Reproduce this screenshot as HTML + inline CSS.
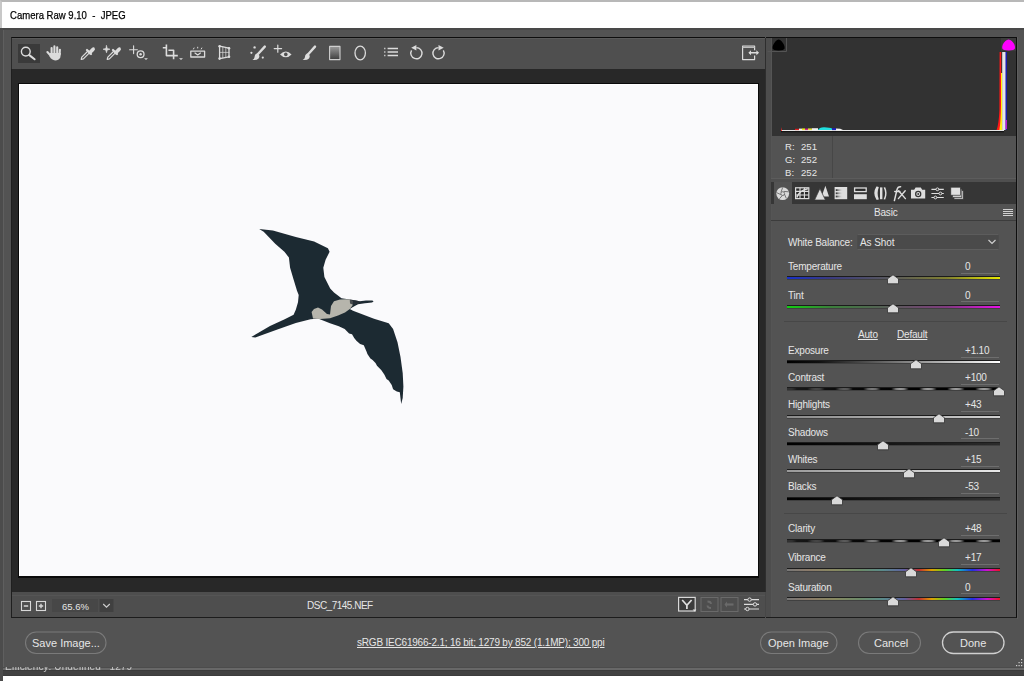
<!DOCTYPE html>
<html><head><meta charset="utf-8">
<style>
*{margin:0;padding:0;box-sizing:border-box}
html,body{width:1024px;height:681px;overflow:hidden;background:#fff;font-family:"Liberation Sans",sans-serif}
.a{position:absolute}
#root{position:relative;width:1024px;height:681px;overflow:hidden}
.t{position:absolute;white-space:nowrap;color:#e6e6e6;font-size:10px;line-height:12px;letter-spacing:-0.2px}
</style></head><body><div id="root">
<!-- desktop strip left -->
<div class="a" style="left:0;top:0;width:3px;height:681px;background:#4c4c4c"></div>
<!-- title bar -->
<div class="a" style="left:0;top:0;width:1024px;height:28px;background:#fff;border-top:2px solid #b8b8b8;border-left:2px solid #c8c8c8"></div>
<div class="t" style="left:10px;top:7.6px;color:#000;font-size:11.5px;line-height:14px;letter-spacing:0;-webkit-text-stroke:0.25px #000;transform:scaleX(0.83);transform-origin:0 0">Camera Raw 9.10&nbsp; -&nbsp; JPEG</div>
<!-- dialog body -->
<div class="a" style="left:3px;top:28px;width:1021px;height:640px;background:#535353"></div>
<div class="a" style="left:3px;top:28px;width:1px;height:640px;background:#5f5f5f"></div>
<div class="a" style="left:3px;top:28px;width:1021px;height:2px;background:#494949"></div>
<!-- toolbar -->
<div class="a" style="left:11px;top:37px;width:754px;height:32px;background:#4f4f4f;border-top:1px solid #0e0e0e;border-left:1px solid #2a2a2a;box-shadow:inset 0 1px 0 #5a5a5a"></div>
<!-- image area -->
<div class="a" style="left:11px;top:69px;width:754px;height:523px;background:#282828;border-left:1px solid #1f1f1f"></div>
<div class="a" style="left:18px;top:83px;width:741px;height:495px;background:#fafafc;border:1px solid #0a0a0a;border-bottom-width:2px;box-shadow:inset 1px 1px 0 #fff"></div>
<!-- image bottom bar -->
<div class="a" style="left:11px;top:592px;width:754px;height:26px;background:#4e4e4e;border-left:1px solid #1f1f1f;border-bottom:1px solid #1c1c1c"></div>
<div class="a" style="left:12px;top:595px;width:753px;height:1px;background:#555"></div>
<!-- right panel -->
<div class="a" style="left:766px;top:37px;width:251px;height:581px;background:#535353;border-top:1px solid #0e0e0e;border-right:1px solid #0e0e0e;border-bottom:1px solid #1c1c1c"></div>
<div class="a" style="left:765px;top:38px;width:1px;height:554px;background:#2e2e2e"></div><div class="a" style="left:765px;top:592px;width:1px;height:25px;background:#474747"></div>
<div class="a" style="left:766px;top:38px;width:5px;height:579px;background:#4d4d4d"></div>
<div class="a" style="left:771px;top:38px;width:1px;height:579px;background:#555"></div>
<div class="a" style="left:772px;top:38px;width:244px;height:98px;background:#323232"></div>
<div class="a" style="left:1017px;top:37px;width:1px;height:582px;background:#5e5e5e"></div>
<!-- tabs bar -->
<div class="a" style="left:771px;top:182px;width:245px;height:22px;background:#363636"></div>
<div class="a" style="left:774px;top:182px;width:18px;height:22px;background:#535353"></div>
<div class="a" style="left:771px;top:220px;width:245px;height:1px;background:#3c3c3c"></div>

<svg class="a" style="left:0;top:0" width="1024" height="681" viewBox="0 0 1024 681">
<g fill="none" stroke="#dcdcdc" stroke-linecap="round" stroke-linejoin="round">
<!-- zoom selected -->
<rect x="18" y="44" width="22" height="19" fill="#3a3a3a" stroke="none"/>
<circle cx="25.8" cy="51.6" r="4.4" stroke-width="1.4"/>
<line x1="29.3" y1="55.1" x2="34.6" y2="59.3" stroke-width="2"/>
<!-- hand -->
<g stroke="#dcdcdc" stroke-width="2.1" stroke-linecap="round">
<path d="M51.6 48 V53.5 M54.4 46.4 V53 M57.2 47.2 V53 M59.9 49.8 L59.6 54.5 M47.4 52 L50.6 55.6"/>
</g>
<path d="M50 53 H60.9 L60.3 57.4 Q58.8 60.4 55.2 60.4 Q51.6 60.4 49.6 56.6 Z" fill="#dcdcdc" stroke="none"/>
<!-- eyedropper -->
<g transform="translate(80,46)">
<path d="M1.2 13.4 L1.8 11.2 L8 5 L9.6 6.6 L3.4 12.8 Z" stroke-width="1.2"/>
<path d="M7 4 L11 8" stroke-width="2.2"/>
<path d="M9 6 L12.4 2.6 Q13.6 1.6 14 2.4 Q14.6 3.2 13.4 4.4 L10 7.8" fill="#dcdcdc" stroke-width="1.6"/>
</g>
<!-- color sampler -->
<path d="M106.5 45.6 L107.3 48.4 L110 49.2 L107.3 50 L106.5 52.8 L105.7 50 L103 49.2 L105.7 48.4 Z" fill="#dcdcdc" stroke-width="0.6"/>
<g transform="translate(106,46)">
<path d="M1.2 13.4 L1.8 11.2 L8 5 L9.6 6.6 L3.4 12.8 Z" stroke-width="1.2"/>
<path d="M7 4 L11 8" stroke-width="2.2"/>
<path d="M9 6 L12.4 2.6 Q13.6 1.6 14 2.4 Q14.6 3.2 13.4 4.4 L10 7.8" fill="#dcdcdc" stroke-width="1.6"/>
</g>
<!-- targeted adjustment -->
<path d="M133.6 45.8 V53.6 M129.6 49.8 H137.4" stroke-width="1.1"/>
<circle cx="140.6" cy="54.2" r="3.4" stroke-width="1.3"/>
<circle cx="140.6" cy="54.2" r="1.2" fill="#dcdcdc" stroke="none"/>
<path d="M144 58.2 H148 L146 60 Z" fill="#dcdcdc" stroke="none"/>
<!-- crop -->
<path d="M163.6 47.8 H166.4 M166.4 45.4 V55.6 H176 M169.2 50.2 H173.6 V58.4 M176.2 55.6 H177" stroke-width="1.6" stroke-linecap="square"/>
<path d="M179 58.2 H183 L181 60 Z" fill="#dcdcdc" stroke="none"/>
<!-- straighten -->
<rect x="190.8" y="51.2" width="13.8" height="5.8" stroke-width="1.3"/>
<path d="M195 53 L197.7 55 L200.4 53" stroke-width="1.2"/>
<path d="M193.5 49 L194 48 M197.7 47.2 V48 M201.8 48 L201.3 49" stroke-width="1"/>
<!-- transform -->
<path d="M219.6 46.2 L229 48.2 L229 56.8 L219.6 58.6 Z" stroke-width="1.3"/>
<path d="M222.8 47 V58 M225.8 47.6 V57.4 M219.6 52.4 H229" stroke-width="0.7"/>
<circle cx="219.6" cy="46.2" r="1.3" fill="#dcdcdc" stroke="none"/>
<circle cx="229" cy="48.2" r="1.3" fill="#dcdcdc" stroke="none"/>
<circle cx="229" cy="56.8" r="1.3" fill="#dcdcdc" stroke="none"/>
<circle cx="219.6" cy="58.6" r="1.3" fill="#dcdcdc" stroke="none"/>
<!-- spot removal -->
<path d="M264.8 46.6 L258 54" stroke-width="2.4"/>
<path d="M257.6 53.2 Q254.4 54.2 254.6 57 Q254.4 59 252.4 60 Q256.8 60.4 258.6 58.4 Q260 56.6 259 55 Z" fill="#dcdcdc" stroke="none"/>
<circle cx="254.6" cy="47.4" r="1.2" fill="#dcdcdc" stroke="none"/>
<circle cx="251.4" cy="52.8" r="1.1" fill="#dcdcdc" stroke="none"/>
<circle cx="262.8" cy="57.6" r="1.1" fill="#dcdcdc" stroke="none"/>
<!-- red eye -->
<path d="M277.8 45 V52.2 M274.2 48.6 H281.6" stroke-width="1.2"/>
<path d="M280 54.4 Q285.8 48.6 291.6 54.4 Q285.8 60.2 280 54.4 Z" fill="#dcdcdc" stroke="none"/>
<circle cx="285.8" cy="54.4" r="1.8" fill="#4f4f4f" stroke="none"/>
<!-- brush -->
<path d="M315 46.6 L308.4 54" stroke-width="2.4"/>
<path d="M308 53.2 Q304.8 54.2 305 57 Q304.8 59 302.6 60 Q307.2 60.4 309 58.4 Q310.4 56.6 309.4 55 Z" fill="#dcdcdc" stroke="none"/>
<!-- graduated filter -->
<defs><linearGradient id="gf" x1="0" y1="0" x2="0" y2="1"><stop offset="0" stop-color="#9a9a9a"/><stop offset="1" stop-color="#3e3e3e"/></linearGradient>
<linearGradient id="gfh" x1="0" y1="0" x2="1" y2="0"><stop offset="0" stop-color="#e6e6e6"/><stop offset="1" stop-color="#444"/></linearGradient></defs>
<rect x="329.6" y="46.4" width="10.4" height="13.2" fill="url(#gf)" stroke="#cfcfcf" stroke-width="1.1"/>
<!-- radial -->
<ellipse cx="360.2" cy="53" rx="5.2" ry="6.8" stroke-width="1.3"/>
<!-- list -->
<path d="M384.2 48.5 h1.2 M384.2 52 h1.2 M384.2 55.5 h1.2" stroke-width="1.3" stroke-linecap="butt"/>
<path d="M387.6 48.5 H398 M387.6 52 H398 M387.6 55.5 H398" stroke-width="1.3" stroke-linecap="butt"/>
<!-- rotate left -->
<path d="M416.4 47.6 A5.6 5.6 0 1 1 411.55 50.4" stroke-width="1.4" stroke-linecap="butt"/>
<path d="M411.2 47.7 L416.4 44.9 L416.4 50.5 Z" fill="#dcdcdc" stroke="none"/>
<!-- rotate right -->
<path d="M438.5 47.6 A5.6 5.6 0 1 0 443.35 50.4" stroke-width="1.4" stroke-linecap="butt"/>
<path d="M443.7 47.7 L438.5 44.9 L438.5 50.5 Z" fill="#dcdcdc" stroke="none"/>
<!-- exit -->
<path d="M754.6 50.2 V46 H742.6 V59.6 H754.6 V55.4" stroke-width="1.2" stroke-linecap="butt"/>
<path d="M743 47.2 H754" stroke-width="1.6" stroke="#bdbdbd"/>
<path d="M749.6 52.7 H757.6" stroke-width="1.4"/>
<path d="M748.4 52.7 L751 50.2 V55.2 Z M759 52.7 L756.4 50.2 V55.2 Z" fill="#dcdcdc" stroke="none"/>
</g>
</svg>

<!-- RGB readout -->
<div class="t" style="left:785px;top:140px;line-height:13px;font-size:9.6px;letter-spacing:0">R:<br>G:<br>B:</div>
<div class="t" style="left:801px;top:140px;line-height:13px;font-size:9.6px;letter-spacing:0">251<br>252<br>252</div>
<div class="a" style="left:832px;top:136px;width:1px;height:45px;background:#474747"></div>
<div class="a" style="left:771px;top:178px;width:245px;height:1px;background:#5c5c5c"></div><div class="a" style="left:771px;top:179px;width:245px;height:3px;background:#4f4f4f"></div>
<!-- Basic header -->
<div class="t" style="left:874px;top:207px">Basic</div>
<div class="a" style="left:1003px;top:209px;width:10px;height:8px;background:repeating-linear-gradient(180deg,#d0d0d0 0,#d0d0d0 1px,transparent 1px,transparent 2px)"></div>
<!-- white balance -->
<div class="t" style="left:788px;top:237px">White Balance:</div>
<div class="a" style="left:857px;top:234px;width:142px;height:16px;background:#4a4a4a;border:1px solid #4c4c4c;border-top-color:#5c5c5c;border-bottom-color:#5e5e5e"></div>
<div class="t" style="left:860px;top:237px;letter-spacing:-0.1px">As Shot</div>
<svg class="a" style="left:987px;top:238px" width="10" height="8"><path d="M1.5 2 L5 5.5 L8.5 2" fill="none" stroke="#cfcfcf" stroke-width="1.2"/></svg>
<div class="a" style="left:784px;top:321px;width:223px;height:1px;background:#474747"></div>
<div class="t" style="left:858px;top:329px;text-decoration:underline">Auto</div>
<div class="t" style="left:897px;top:329px;text-decoration:underline">Default</div>
<div class="a" style="left:784px;top:513px;width:223px;height:1px;background:#474747"></div>
<!-- SLIDERS -->
<div class="t" style="left:788px;top:261.1px">Temperature</div>
<div class="t" style="left:965px;top:261.1px">0</div>
<div class="a" style="left:961px;top:273px;width:38px;height:1px;background:#6e6e6e"></div>
<div class="a" style="left:787px;top:275.6px;width:213px;height:4px;border-top:1px solid #1c1c1c;border-bottom:1px solid #404040;background:linear-gradient(90deg,#1830c8,#3a3a80 20%,#5a5a5a 50%,#808030 75%,#e8e800)"></div>
<svg class="a" style="left:885.0px;top:274.1px" width="16" height="11" viewBox="0 0 16 11"><path d="M2.5 9.8 V4.8 L8 0.8 L13.5 4.8 V9.8 Z" fill="#d9d9d9" stroke="#303030" stroke-width="0.8"/></svg>
<div class="t" style="left:788px;top:289.5px">Tint</div>
<div class="t" style="left:965px;top:289.5px">0</div>
<div class="a" style="left:961px;top:301px;width:38px;height:1px;background:#6e6e6e"></div>
<div class="a" style="left:787px;top:304.9px;width:213px;height:4px;border-top:1px solid #1c1c1c;border-bottom:1px solid #404040;background:linear-gradient(90deg,#10d010,#3a803a 20%,#5a5a5a 50%,#803a80 75%,#e810e8)"></div>
<svg class="a" style="left:885.0px;top:303.4px" width="16" height="11" viewBox="0 0 16 11"><path d="M2.5 9.8 V4.8 L8 0.8 L13.5 4.8 V9.8 Z" fill="#d9d9d9" stroke="#303030" stroke-width="0.8"/></svg>
<div class="t" style="left:788px;top:345.3px">Exposure</div>
<div class="t" style="left:965px;top:345.3px">+1.10</div>
<div class="a" style="left:961px;top:357px;width:38px;height:1px;background:#6e6e6e"></div>
<div class="a" style="left:787px;top:360.2px;width:213px;height:4px;border-top:1px solid #1c1c1c;border-bottom:1px solid #404040;background:linear-gradient(90deg,#000,#101010 15%,#fff)"></div>
<svg class="a" style="left:907.8px;top:358.7px" width="16" height="11" viewBox="0 0 16 11"><path d="M2.5 9.8 V4.8 L8 0.8 L13.5 4.8 V9.8 Z" fill="#d9d9d9" stroke="#303030" stroke-width="0.8"/></svg>
<div class="t" style="left:788px;top:372.0px">Contrast</div>
<div class="t" style="left:965px;top:372.0px">+100</div>
<div class="a" style="left:961px;top:384px;width:38px;height:1px;background:#6e6e6e"></div>
<div class="a" style="left:787px;top:387.2px;width:213px;height:4px;border-top:1px solid #1c1c1c;border-bottom:1px solid #404040;background:#000;background-image:linear-gradient(90deg,rgba(30,30,30,0.85) 0%,rgba(20,20,20,0.5) 25%,rgba(0,0,0,0) 55%),radial-gradient(ellipse 9px 2.2px at 50% 50%,#b0b0b0 0%,#808080 50%,#000 100%);background-size:100% 100%,28px 100%;background-position:0 0,15px 0"></div>
<svg class="a" style="left:990.8px;top:385.7px" width="16" height="11" viewBox="0 0 16 11"><path d="M2.5 9.8 V4.8 L8 0.8 L13.5 4.8 V9.8 Z" fill="#d9d9d9" stroke="#303030" stroke-width="0.8"/></svg>
<div class="t" style="left:788px;top:399.3px">Highlights</div>
<div class="t" style="left:965px;top:399.3px">+43</div>
<div class="a" style="left:961px;top:411px;width:38px;height:1px;background:#6e6e6e"></div>
<div class="a" style="left:787px;top:414.6px;width:213px;height:4px;border-top:1px solid #1c1c1c;border-bottom:1px solid #404040;background:linear-gradient(90deg,#8a8a8a,#d0d0d0)"></div>
<svg class="a" style="left:931.0px;top:413.1px" width="16" height="11" viewBox="0 0 16 11"><path d="M2.5 9.8 V4.8 L8 0.8 L13.5 4.8 V9.8 Z" fill="#d9d9d9" stroke="#303030" stroke-width="0.8"/></svg>
<div class="t" style="left:788px;top:426.8px">Shadows</div>
<div class="t" style="left:965px;top:426.8px">-10</div>
<div class="a" style="left:961px;top:438px;width:38px;height:1px;background:#6e6e6e"></div>
<div class="a" style="left:787px;top:441.8px;width:213px;height:4px;border-top:1px solid #1c1c1c;border-bottom:1px solid #404040;background:linear-gradient(90deg,#000,#2c2c2c)"></div>
<svg class="a" style="left:874.5px;top:440.3px" width="16" height="11" viewBox="0 0 16 11"><path d="M2.5 9.8 V4.8 L8 0.8 L13.5 4.8 V9.8 Z" fill="#d9d9d9" stroke="#303030" stroke-width="0.8"/></svg>
<div class="t" style="left:788px;top:453.9px">Whites</div>
<div class="t" style="left:965px;top:453.9px">+15</div>
<div class="a" style="left:961px;top:466px;width:38px;height:1px;background:#6e6e6e"></div>
<div class="a" style="left:787px;top:469.4px;width:213px;height:4px;border-top:1px solid #1c1c1c;border-bottom:1px solid #404040;background:linear-gradient(90deg,#9a9a9a,#e8e8e8)"></div>
<svg class="a" style="left:901.2px;top:467.9px" width="16" height="11" viewBox="0 0 16 11"><path d="M2.5 9.8 V4.8 L8 0.8 L13.5 4.8 V9.8 Z" fill="#d9d9d9" stroke="#303030" stroke-width="0.8"/></svg>
<div class="t" style="left:788px;top:481.3px">Blacks</div>
<div class="t" style="left:965px;top:481.3px">-53</div>
<div class="a" style="left:961px;top:493px;width:38px;height:1px;background:#6e6e6e"></div>
<div class="a" style="left:787px;top:496.8px;width:213px;height:4px;border-top:1px solid #1c1c1c;border-bottom:1px solid #404040;background:linear-gradient(90deg,#000,#333)"></div>
<svg class="a" style="left:828.8px;top:495.3px" width="16" height="11" viewBox="0 0 16 11"><path d="M2.5 9.8 V4.8 L8 0.8 L13.5 4.8 V9.8 Z" fill="#d9d9d9" stroke="#303030" stroke-width="0.8"/></svg>
<div class="t" style="left:788px;top:523.2px">Clarity</div>
<div class="t" style="left:965px;top:523.2px">+48</div>
<div class="a" style="left:961px;top:535px;width:38px;height:1px;background:#6e6e6e"></div>
<div class="a" style="left:787px;top:538.8px;width:213px;height:4px;border-top:1px solid #1c1c1c;border-bottom:1px solid #404040;background:#000;background-image:linear-gradient(90deg,rgba(30,30,30,0.85) 0%,rgba(20,20,20,0.5) 25%,rgba(0,0,0,0) 55%),radial-gradient(ellipse 9px 2.2px at 50% 50%,#b0b0b0 0%,#808080 50%,#000 100%);background-size:100% 100%,28px 100%;background-position:0 0,15px 0"></div>
<svg class="a" style="left:936.2px;top:537.3px" width="16" height="11" viewBox="0 0 16 11"><path d="M2.5 9.8 V4.8 L8 0.8 L13.5 4.8 V9.8 Z" fill="#d9d9d9" stroke="#303030" stroke-width="0.8"/></svg>
<div class="t" style="left:788px;top:552.3px">Vibrance</div>
<div class="t" style="left:965px;top:552.3px">+17</div>
<div class="a" style="left:961px;top:564px;width:38px;height:1px;background:#6e6e6e"></div>
<div class="a" style="left:787px;top:568.0px;width:213px;height:4px;border-top:1px solid #1c1c1c;border-bottom:1px solid #404040;background:linear-gradient(90deg,#777 0%,#8a7a6a 10%,#888860 22%,#6a8a6a 35%,#5a8a8a 45%,#6060a0 55%,#c03030 62%,#e0a000 68%,#60d020 74%,#10c0c0 80%,#2030e0 87%,#d010d0 94%,#f01020 100%)"></div>
<svg class="a" style="left:902.7px;top:566.5px" width="16" height="11" viewBox="0 0 16 11"><path d="M2.5 9.8 V4.8 L8 0.8 L13.5 4.8 V9.8 Z" fill="#d9d9d9" stroke="#303030" stroke-width="0.8"/></svg>
<div class="t" style="left:788px;top:581.6px">Saturation</div>
<div class="t" style="left:965px;top:581.6px">0</div>
<div class="a" style="left:961px;top:593px;width:38px;height:1px;background:#6e6e6e"></div>
<div class="a" style="left:787px;top:597.1px;width:213px;height:4px;border-top:1px solid #1c1c1c;border-bottom:1px solid #404040;background:linear-gradient(90deg,#777 0%,#8a7a6a 10%,#888860 22%,#6a8a6a 35%,#5a8a8a 45%,#6060a0 55%,#c03030 62%,#e0a000 68%,#60d020 74%,#10c0c0 80%,#2030e0 87%,#d010d0 94%,#f01020 100%)"></div>
<svg class="a" style="left:885.0px;top:595.6px" width="16" height="11" viewBox="0 0 16 11"><path d="M2.5 9.8 V4.8 L8 0.8 L13.5 4.8 V9.8 Z" fill="#d9d9d9" stroke="#303030" stroke-width="0.8"/></svg>
<!-- /SLIDERS -->
<!-- histogram -->
<svg class="a" style="left:0;top:0" width="1024" height="681" viewBox="0 0 1024 681">
<path d="M767.5 51.5 H786.5 V38" fill="none" stroke="#555" stroke-width="1"/>
<path d="M772.6 48.5 Q772.2 45 775.6 41.2 Q778.6 37.8 781.6 41.2 Q785 45 784.6 48.5 Q784 50.4 778.6 50.4 Q773.2 50.4 772.6 48.5 Z" fill="#000"/>
<rect x="1001" y="38" width="15" height="13" fill="#3c3c3c"/>
<path d="M1002.2 48.2 Q1001.8 44.6 1005.4 41 Q1008.6 37.8 1011.8 41 Q1015.4 44.6 1015 48.2 Q1014.4 50.4 1008.6 50.4 Q1002.8 50.4 1002.2 48.2 Z" fill="#ff00ff"/>
<rect x="781" y="130" width="223" height="1.2" fill="#e8e8e8"/><rect x="781" y="131.2" width="223" height="1" fill="#050505"/>
<path d="M781 131 V127 L782 131 Z" fill="#ff2020"/>
<rect x="795" y="128.8" width="4" height="1.3" fill="#e02020"/>
<rect x="799" y="128.6" width="3" height="1.5" fill="#f0f0f0"/>
<rect x="802" y="128.4" width="3" height="1.7" fill="#e8e820"/>
<rect x="805" y="128.6" width="3" height="1.5" fill="#d02090"/>
<rect x="808" y="128.4" width="4" height="1.7" fill="#e0e040"/>
<rect x="812" y="128.2" width="6" height="1.9" fill="#f0f0f0"/>
<path d="M818 130 Q819 127.4 824 127.2 Q830 127.4 832 128.4 L832 130 Z" fill="#20e0e0"/>
<rect x="832" y="128.2" width="4" height="1.9" fill="#2020c0"/>
<path d="M836 130 V128.6 Q841 128.6 843 130 Z" fill="#f0f0f0"/>
<path d="M999.6 52 H1001.2 V130 H996.6 Q998.8 124 999.4 110 Z" fill="#ff1818"/>
<path d="M1001 73 H1002.4 V130 H999.4 Q1000.8 122 1001 105 Z" fill="#ffee10"/>
<rect x="1002.2" y="52" width="3.6" height="78" fill="#e6e6e6"/>
<rect x="1005.6" y="52" width="1.2" height="78" fill="#1818d0"/>
<rect x="1005.6" y="120" width="1.2" height="9" fill="#e020e0"/>
<!-- tab icons -->
<circle cx="782.7" cy="193.6" r="6.4" fill="#dadada"/>
<g fill="none" stroke="#6a6a6a" stroke-width="0.9">
<path d="M782.7 187.4 L781 192.2 M788.6 191.8 L783.8 191.4 M786.4 198.6 L784.4 194 M779.4 198.8 L782.4 195.4 M776.6 192.6 L780.8 194.6"/>
<circle cx="782.7" cy="193.6" r="1.9"/>
</g>
<rect x="795.6" y="187.8" width="13.2" height="10.8" fill="#2a2a2a" stroke="#dedede" stroke-width="1.2"/>
<path d="M800 187.8 V198.6 M804.4 187.8 V198.6 M795.6 191.4 H808.8 M795.6 195 H808.8" stroke="#dedede" stroke-width="1.1" fill="none"/>
<path d="M796.8 197.6 Q799.4 190.4 807.8 188.8" stroke="#dedede" stroke-width="1.5" fill="none"/>
<path d="M821.6 196.4 L825.4 185.8 L829 196.4 Z" fill="#dedede"/>
<path d="M814.6 200 L819.9 188.6 L825.4 200 Z" fill="#dedede" stroke="#363636" stroke-width="0.7"/>
<defs><linearGradient id="hsl" x1="0" y1="0" x2="1" y2="0"><stop offset="0" stop-color="#202020"/><stop offset="0.7" stop-color="#dedede" stop-opacity="0"/></linearGradient></defs>
<rect x="834.6" y="187" width="12.6" height="12.2" fill="#dedede"/>
<rect x="835.8" y="189.2" width="10.4" height="1.8" fill="url(#hsl)"/>
<rect x="835.8" y="192.4" width="10.4" height="1.8" fill="url(#hsl)"/>
<rect x="835.8" y="195.6" width="10.4" height="1.8" fill="url(#hsl)"/>
<rect x="854.6" y="188" width="11.6" height="3.6" fill="#2a2a2a" stroke="#dedede" stroke-width="1.3"/>
<rect x="854" y="194.2" width="12.8" height="5" fill="#dedede"/>
<path d="M876.4 186.6 Q872.2 193.2 876.4 199.8 Q878.6 199.8 878.8 199.2 Q876.4 193.2 878.8 187.2 Q878.6 186.6 876.4 186.6 Z" fill="#dedede"/>
<rect x="880" y="187.4" width="2.4" height="11.8" fill="#dedede"/>
<path d="M883.6 187.4 Q886.8 193.2 883.6 199.2 L885.2 199.4 Q888 193.2 885.2 187.2 Z" fill="#dedede"/>
<path d="M894.4 200.6 L897 189.6 Q897.8 186.6 900.6 186.8 M894.8 191.4 H899.8" stroke="#dedede" stroke-width="1.5" fill="none" stroke-linecap="round"/>
<path d="M898.6 190.8 L905.4 198.6 M905.2 190.8 L898.4 198.6" stroke="#dedede" stroke-width="1.4" fill="none" stroke-linecap="round"/>
<path d="M911 189.8 H914.2 L915.6 187.4 H920.8 L922.2 189.8 H925.2 V198.6 H911 Z" fill="#dedede"/>
<circle cx="918.2" cy="194" r="3.2" fill="#363636"/>
<circle cx="918.2" cy="194" r="1.9" fill="#dedede"/>
<circle cx="918.2" cy="194" r="0.9" fill="#363636"/>
<g stroke="#dedede" stroke-width="1.2" fill="none">
<path d="M931.4 189.3 H943.8 M931.4 193.5 H943.8 M931.4 197.5 H943.8"/>
</g>
<g fill="#363636" stroke="#dedede" stroke-width="1">
<circle cx="937.4" cy="189.3" r="1.4"/><circle cx="940.4" cy="193.5" r="1.4"/><circle cx="935.4" cy="197.5" r="1.4"/>
</g>
<g stroke="#363636" stroke-width="0.7">
<rect x="954" y="190.6" width="9.4" height="8.6" fill="#c8c8c8"/>
<rect x="952.4" y="189" width="9.4" height="8.6" fill="#d0d0d0"/>
<rect x="950.8" y="187.2" width="9.6" height="8" fill="#e0e0e0"/>
</g>
<!-- bottom bar icons -->
<g fill="none" stroke="#d8d8d8" stroke-width="1.1">
<rect x="21.5" y="601.5" width="9" height="9"/>
<rect x="36.5" y="601.5" width="9" height="9"/>
<path d="M23.8 606 H28.2 M38.8 606 H43.2 M41 603.8 V608.2" stroke-width="1.4"/>
</g>
<rect x="52" y="599" width="46" height="13" fill="#474747"/>
<rect x="99.5" y="599" width="14" height="13" fill="#404040"/>
<path d="M103.2 604 L106.5 607.2 L109.8 604" fill="none" stroke="#cfcfcf" stroke-width="1.1"/>
<rect x="678.6" y="597.4" width="16.6" height="13.6" fill="#3c3c3c" stroke="#d8d8d8" stroke-width="1.2"/>
<path d="M682.2 600 L686.9 605.2 L691.6 600 M686.9 605.2 V609" fill="none" stroke="#e0e0e0" stroke-width="1.7"/>
<path d="M692.6 609.6 H696.4 L694.5 611.6Z" fill="#e0e0e0"/>
<rect x="701" y="597.5" width="17" height="14" fill="none" stroke="#6a6a6a" stroke-width="1"/>
<rect x="721" y="597.5" width="17" height="14" fill="none" stroke="#6a6a6a" stroke-width="1"/>
<path d="M707.5 601.5 Q711 601.5 711 604 M711 608 Q707.5 608 707.5 605.5" stroke="#6a6a6a" stroke-width="1.8" fill="none"/>
<path d="M725.5 604.5 H733.5" stroke="#6a6a6a" stroke-width="2.2" fill="none"/><path d="M727 601.5 V607.5 L724.5 604.5 Z" fill="#6a6a6a"/>
<g stroke="#dcdcdc" stroke-width="1.2" fill="none">
<path d="M744 599.6 H759 M744 604.4 H759 M744 609 H759"/>
</g>
<g fill="#4b4b4b" stroke="#dcdcdc" stroke-width="1">
<circle cx="749.6" cy="599.6" r="1.7"/><circle cx="755" cy="604.4" r="1.7"/><circle cx="747.4" cy="609" r="1.7"/>
</g>
<!-- buttons -->
<g fill="none" stroke-width="1.1">
<rect x="25.5" y="632" width="80.5" height="21.5" rx="10.75" stroke="#7a7a7a"/>
<rect x="760.5" y="632" width="76.5" height="21.5" rx="10.75" stroke="#7a7a7a"/>
<rect x="858.5" y="632" width="62" height="21.5" rx="10.75" stroke="#7a7a7a"/>
<rect x="942.5" y="632" width="61.5" height="21.5" rx="10.75" stroke="#d0d0d0" stroke-width="1.3"/>
</g>
</svg>
<div class="t" style="left:62px;top:600.5px;font-size:9.5px;letter-spacing:0">65.6%</div>
<div class="t" style="left:307px;top:600px;font-size:10px;letter-spacing:-0.5px">DSC_7145.NEF</div>
<div class="t" style="left:32px;top:637px;font-size:11px;letter-spacing:0">Save Image...</div>
<div class="t" style="left:357px;top:637px;font-size:10px;text-decoration:underline">sRGB IEC61966-2.1; 16 bit; 1279 by 852 (1.1MP); 300 ppi</div>
<div class="t" style="left:768px;top:637px;font-size:11px;letter-spacing:0">Open Image</div>
<div class="t" style="left:874px;top:637px;font-size:11px;letter-spacing:0">Cancel</div>
<div class="t" style="left:960px;top:637px;font-size:11px;letter-spacing:0">Done</div>
<!-- bird -->
<svg class="a" style="left:0;top:0" width="1024" height="681" viewBox="0 0 1024 681"><defs><filter id="soft" x="-10%" y="-10%" width="120%" height="120%"><feGaussianBlur stdDeviation="0.35"/></filter></defs>
<path fill="#1f2a33" filter="url(#soft)" d="M259.2 228.9 L272.9 230.6 L295.8 236.9 L314.1 241.5 L327.9 248.3 L329.6 251.8 L325.6 259.8 L323.3 267.8 L324.4 277.0 L330.2 288.4 L334.0 292.5 L341.5 298.3 L349.8 299.5 L353.0 300.0 L359.7 301.2 L366.0 300.6 L372.4 300.4 L373.6 301.6 L372.0 302.6 L365.0 303.2 L358.0 304.2 L353.0 307.0 L349.8 309.0 L353.0 310.7 L374.0 318.8 L388.7 323.2 L393.1 329.1 L397.5 342.3 L400.5 357.0 L402.7 373.1 L403.4 386.4 L402.7 398.1 L401.2 404.0 L399.8 392.2 L396.8 391.5 L393.1 389.3 L391.7 384.9 L388.7 380.5 L386.5 379.0 L384.3 374.6 L381.4 370.2 L379.2 368.0 L377.0 365.8 L375.5 362.9 L372.6 359.9 L370.4 358.5 L367.4 354.1 L366.7 351.9 L365.2 348.5 L363.8 345.2 L360.1 344.1 L356.4 340.8 L354.2 337.9 L352.0 334.2 L349.1 333.5 L344.7 329.1 L338.8 326.2 L338.8 326.2 L330.0 323.2 L318.0 318.5 L310.5 319.2 L295.8 322.9 L277.4 329.5 L255.3 337.6 L251.3 336.9 L270.0 325.9 L284.7 319.2 L293.6 314.8 L295.8 309.7 L298.0 302.3 L298.7 295.0 L297.0 290.7 L293.5 279.3 L290.1 267.8 L288.9 257.5 L284.4 251.8 L275.2 243.8 L263.7 231.7 Z"/>
<path fill="#b6b5ac" filter="url(#soft)" d="M311.6 312.0 L314.0 309.0 L318.0 307.5 L322.0 309.5 L327.0 314.0 L330.0 314.5 L331.0 306.0 L334.0 301.2 L340.0 299.5 L346.0 299.2 L350.0 299.6 L353.0 301.0 L352.5 305.5 L349.8 309.0 L345.0 312.5 L338.0 315.5 L330.0 318.2 L320.0 319.0 L313.0 318.5 Z"/>
<path fill="#2a3137" d="M349.8 299.8 Q355 299.6 360 301.6 L358 304 Q353 305 350 303.5 Z" opacity="0.8"/>
</svg>
<!-- bottom status strip (desktop) -->
<div class="a" style="left:3px;top:667px;width:1021px;height:1px;background:#4c4c4c"></div>
<div class="a" style="left:3px;top:668px;width:1021px;height:2px;background:#686868"></div>
<div class="a" style="left:3px;top:670px;width:1021px;height:6px;background:#414141;border-top:1px solid #3a3a3a;border-bottom:1px solid #3c3c3c"></div>
<div class="a" style="left:4px;top:667px;width:130px;height:5px;overflow:hidden;opacity:0.8"><div class="t" style="left:1px;top:-6.5px;font-size:10px;color:#e0e0e0;letter-spacing:0.1px">Efficiency: Undefined&nbsp;&nbsp; 1279 by</div></div>
<svg class="a" style="left:1014px;top:658px" width="10" height="10"><g fill="#cfcfcf"><rect x="7" y="1" width="1.2" height="1.2"/><rect x="4.5" y="4" width="1.2" height="1.2"/><rect x="7" y="4" width="1.2" height="1.2"/><rect x="2" y="7" width="1.2" height="1.2"/><rect x="4.5" y="7" width="1.2" height="1.2"/><rect x="7" y="7" width="1.2" height="1.2"/></g></svg>
</div></body></html>
